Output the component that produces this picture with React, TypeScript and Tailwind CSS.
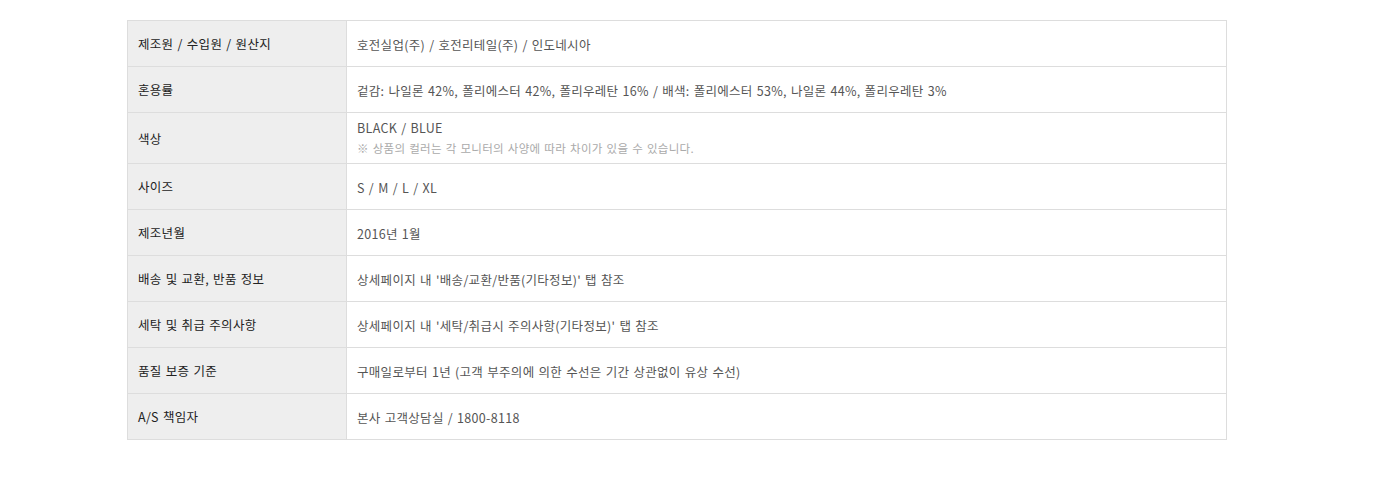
const rows: { label: string; value: string; note?: string }[] = [
  { label: "제조원 / 수입원 / 원산지", value: "호전실업(주) / 호전리테일(주) / 인도네시아" },
  {
    label: "혼용률",
    value:
      "겉감: 나일론 42%, 폴리에스터 42%, 폴리우레탄 16% / 배색: 폴리에스터 53%, 나일론 44%, 폴리우레탄 3%",
  },
  {
    label: "색상",
    value: "BLACK / BLUE",
    note: "※ 상품의 컬러는 각 모니터의 사양에 따라 차이가 있을 수 있습니다.",
  },
  { label: "사이즈", value: "S / M / L / XL" },
  { label: "제조년월", value: "2016년 1월" },
  { label: "배송 및 교환, 반품 정보", value: "상세페이지 내 '배송/교환/반품(기타정보)' 탭 참조" },
  { label: "세탁 및 취급 주의사항", value: "상세페이지 내 '세탁/취급시 주의사항(기타정보)' 탭 참조" },
  { label: "품질 보증 기준", value: "구매일로부터 1년 (고객 부주의에 의한 수선은 기간 상관없이 유상 수선)" },
  { label: "A/S 책임자", value: "본사 고객상담실 / 1800-8118" },
];

export default function App() {
  return (
    <div className="min-h-screen bg-white pt-[20px] pl-[127px] font-['Noto_Sans_CJK_KR',sans-serif] text-[12.5px] tracking-[0.3px] [word-spacing:1px]">
      {/* Product info table */}
      <div className="w-[1100px] border border-[#dddddd]">
        {rows.map((row, i) => (
          <div
            key={row.label}
            className={`flex ${i > 0 ? "border-t border-[#dddddd]" : ""} ${
              row.note ? "h-[51px]" : i > 0 ? "h-[46px]" : "h-[45px]"
            }`}
          >
            <div className="flex w-[219px] shrink-0 items-center border-r border-[#dddddd] bg-[#eeeeee] pt-[2px] pl-[10px] text-[#222222]">
              {row.label}
            </div>
            <div
              className={`flex flex-1 flex-col justify-center pl-[10px] leading-[20px] text-[#555555] ${
                row.note ? "" : "pt-[2px]"
              }`}
            >
              <span>{row.value}</span>
              {row.note && <span className="text-[11.5px] text-[#aaaaaa]">{row.note}</span>}
            </div>
          </div>
        ))}
      </div>
    </div>
  );
}
